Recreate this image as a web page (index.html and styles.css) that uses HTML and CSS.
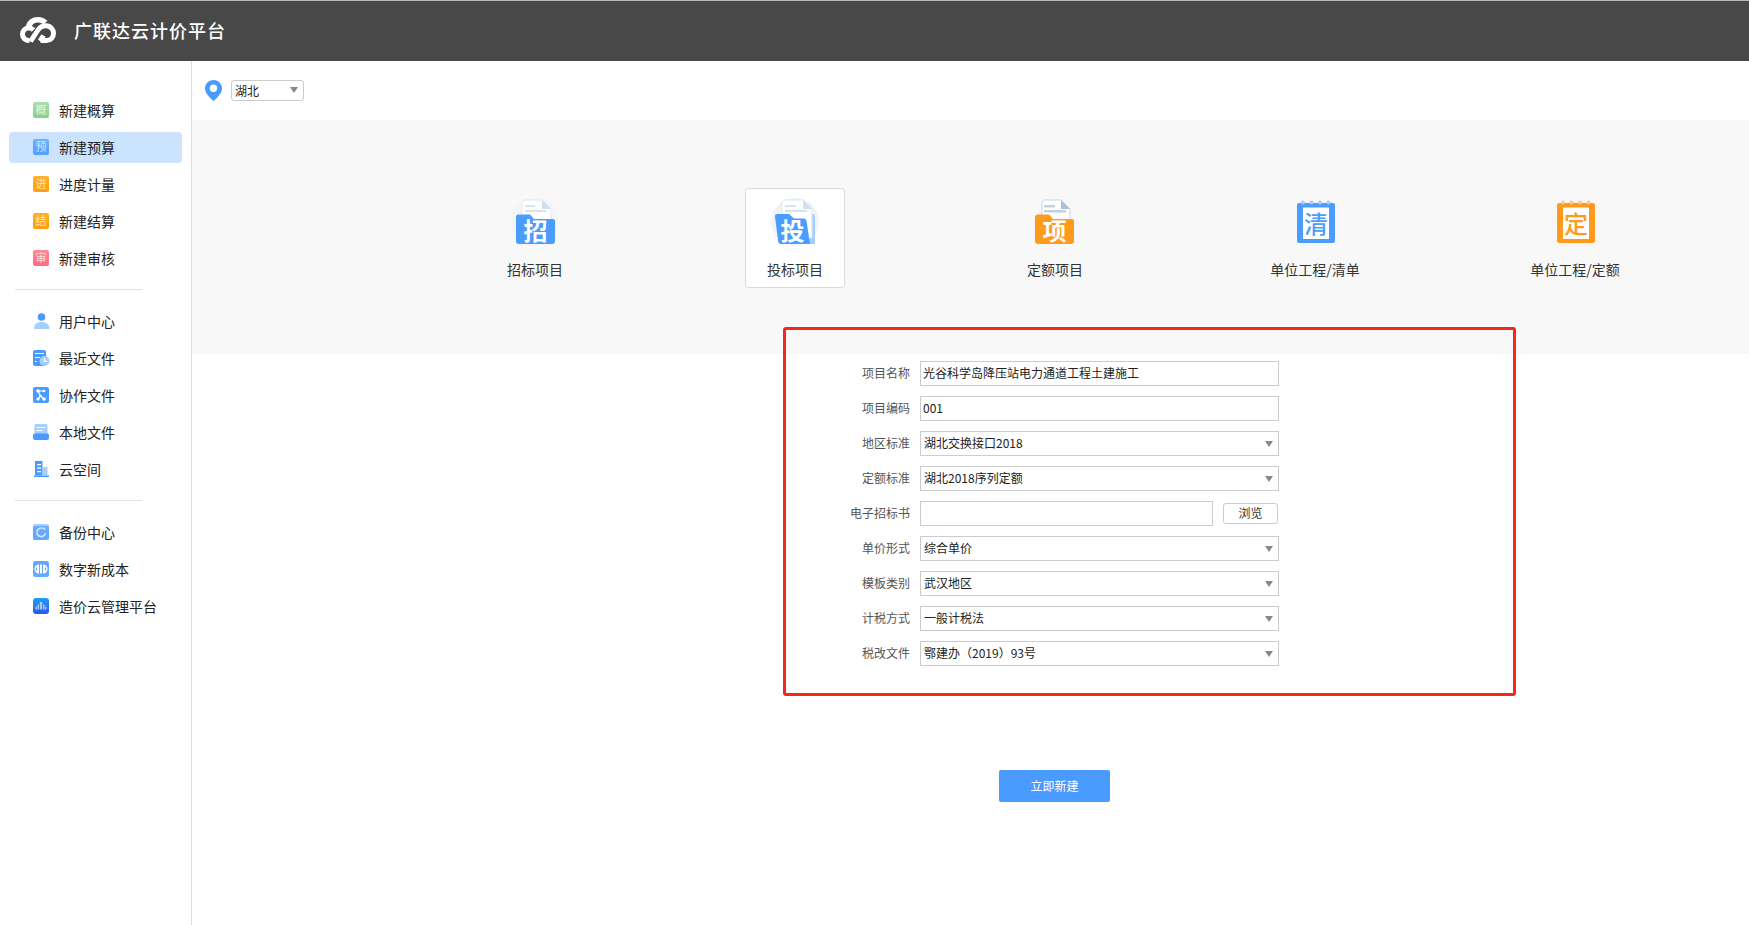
FILE: index.html
```html
<!DOCTYPE html>
<html lang="zh-CN">
<head>
<meta charset="utf-8">
<title>广联达云计价平台</title>
<link rel="stylesheet" href="styles.css">
</head>
<body>
<header class="topbar">
  <svg class="logo" viewBox="0 0 36 26" fill="none">
    <path class="logo-stroke" d="M9.500 23.500C5 23.500 2.500 20.500 2.500 17.300C2.500 14 5 11.200 8.500 10.800C10.500 10.800 12 11.500 13.500 13"/>
    <path class="logo-stroke thick" d="M8.500 9.500C10 5 14 2.800 18 2.800C21 2.800 23.500 3.800 25.500 5.800"/>
    <path class="logo-stroke" d="M10.500 24.500L18 13C20 10 23 8.800 26 8.800C30.500 8.800 33.500 12.500 33.500 16.300C33.500 20.500 30.500 23.500 26.500 23.500H20.500"/>
    <path class="logo-stroke" d="M20 24L23.500 18.500"/>
  </svg>
  <h1 class="brand">广联达云计价平台</h1>
</header>
<div class="layout">
  <nav class="sidebar">
    <ul class="nav-group">
      <li class="nav-item"><span class="badge badge-green">概</span>新建概算</li>
      <li class="nav-item active"><span class="badge badge-blue">预</span>新建预算</li>
      <li class="nav-item"><span class="badge badge-orange">进</span>进度计量</li>
      <li class="nav-item"><span class="badge badge-orange">结</span>新建结算</li>
      <li class="nav-item"><span class="badge badge-red">审</span>新建审核</li>
    </ul>
    <hr class="nav-divider">
    <ul class="nav-group">
      <li class="nav-item">
        <svg class="nav-icon" viewBox="0 0 16 16"><path class="c-pale" d="M1 16C1 11.500 4 9 8.500 9S16.500 11.500 16.500 16Z"/><circle class="c-blue" cx="8.500" cy="4" r="3.800"/></svg>
        用户中心</li>
      <li class="nav-item">
        <svg class="nav-icon" viewBox="0 0 16 16"><rect class="c-blue" x="0" y="0" width="13" height="16" rx="2"/><path class="c-white" d="M2 3H11V4H2ZM2 7H7V8H2ZM2 11H4V12H2Z"/><circle class="c-pale" cx="11.500" cy="11" r="5"/><path class="line-white" d="M11.500 8V11.300H14"/></svg>
        最近文件</li>
      <li class="nav-item">
        <svg class="nav-icon" viewBox="0 0 16 16"><rect class="c-blue" width="16" height="16" rx="2"/><path class="line-white" d="M5 4L7.500 9L11 12M5 4H11M7.500 9L5 12"/><circle class="c-white" cx="5" cy="4" r="1.800"/><circle class="c-white" cx="11" cy="4" r="1.300"/><circle class="c-white" cx="7.500" cy="9" r="1.300"/><circle class="c-white" cx="5" cy="12" r="1.600"/><circle class="c-white" cx="11" cy="12" r="1.800"/></svg>
        协作文件</li>
      <li class="nav-item">
        <svg class="nav-icon" viewBox="0 0 16 16"><rect class="c-pale" x="1.500" y="0" width="13" height="11" rx="1.500"/><path class="c-white" d="M3.500 3H12.500V4H3.500ZM3.500 6H9.500V7H3.500Z"/><path class="c-blue" d="M0 11.500C0 10 1 9.500 2 9.500H14C15 9.500 16 10 16 11.500V14C16 15.200 15 16 14 16H2C1 16 0 15.200 0 14Z"/></svg>
        本地文件</li>
      <li class="nav-item">
        <svg class="nav-icon" viewBox="0 0 16 16"><path class="c-blue" d="M2 0H9.500V14.500H2Z"/><path class="c-pale" d="M10 6H14.500V14.500H10Z"/><path class="c-white" d="M4 3H8V4.200H4ZM4 6.500H8V7.700H4ZM4 10H8V11.200H4Z"/><rect class="c-blue" x="1" y="14.500" width="15" height="1.500"/></svg>
        云空间</li>
    </ul>
    <hr class="nav-divider">
    <ul class="nav-group">
      <li class="nav-item">
        <svg class="nav-icon" viewBox="0 0 16 16"><rect class="c-pale" width="16" height="16" rx="2"/><rect class="c-blue-soft" y="2" width="16" height="14" rx="2"/><path class="line-pale" d="M11.500 5.500A4.300 4.300 0 1 0 12.500 9"/><path class="c-pale" d="M10 3.500L13 3.500L13 6.800Z"/></svg>
        备份中心</li>
      <li class="nav-item">
        <svg class="nav-icon" viewBox="0 0 16 16"><rect class="c-blue-soft" width="16" height="16" rx="2.500"/><path class="c-white" d="M6 3.500V12.500A4.500 4.500 0 0 1 6 3.500ZM10 3.500A4.500 4.500 0 0 1 10 12.500ZM7 3.500H9V12.500H7Z"/><path class="line-blue" d="M3.500 6.500V9.500M12.500 6.500V9.500"/></svg>
        数字新成本</li>
      <li class="nav-item">
        <svg class="nav-icon" viewBox="0 0 16 16"><defs><linearGradient id="deep" x1="0" y1="0" x2="0" y2="1"><stop offset="0" stop-color="#1ea0f5"/><stop offset="1" stop-color="#2a55ee"/></linearGradient></defs><rect width="16" height="16" rx="3" fill="url(#deep)"/><path class="c-translucent" d="M2.500 11.500V8.500H4V11.500H4.500V6.500H6V11.500H6.800V4H9.200V11.500H10V6.500H11.500V11.500H12V8.500H13.500V11.500Z"/></svg>
        造价云管理平台</li>
    </ul>
  </nav>

  <main class="content">
    <div class="region-bar">
      <svg class="pin" viewBox="0 0 17 21"><path class="pin-body" d="M8.500 0C3.800 0 0 3.700 0 8.300C0 13.500 5.500 18.500 8.500 21C11.500 18.500 17 13.500 17 8.300C17 3.700 13.200 0 8.500 0Z"/><circle class="c-white" cx="8.500" cy="8.300" r="3.700"/></svg>
      <div class="select-wrap region-select"><select class="control select-plain"><option>湖北</option></select></div>
    </div>

    <section class="type-band">
      <div class="type-cell"><div class="type-card">
        <svg class="type-icon" viewBox="0 0 48 48">
          <circle class="halo" cx="24" cy="24" r="24"/>
          <path class="doc" d="M11 5C11 3.300 12.300 2 14 2H31L40 11V30H11Z"/>
          <path class="fold" d="M31 2L40 11H31Z"/>
          <path class="doc-line" d="M14 7H24V9H14ZM14 12H35V14H14Z"/>
          <path class="folder-blue" d="M5 19C5 17.500 6 16.500 7.500 16.500H19L23 21H42C43.500 21 44 22 44 23V43C44 45 43 46 41 46H8C6 46 5 45 5 43Z"/>
          <text class="icon-char" x="24.500" y="42">招</text>
        </svg>
        <span class="type-label">招标项目</span>
      </div></div>
      <div class="type-cell"><div class="type-card selected">
        <svg class="type-icon" viewBox="0 0 48 48">
          <circle class="halo-strong" cx="24" cy="24" r="24"/>
          <path class="back-sheet" d="M36 16H42C43 16 44 17 44 18V46H36Z"/>
          <path class="doc" d="M11 5C11 3.300 12.300 2 14 2H32L41 11V40H11Z"/>
          <path class="fold" d="M32 2L41 11H32Z"/>
          <path class="doc-line" d="M14 7H25V9H14ZM14 12H36V14H14Z"/>
          <path class="folder-blue" d="M4 18.500C3.700 17 4.700 16 6 16H18L23 20.500H32C34 20.500 35 21 35.500 23L39 46H10C8 46 7.500 45 7.200 43.500Z"/>
          <text class="icon-char" x="21.500" y="42">投</text>
        </svg>
        <span class="type-label">投标项目</span>
      </div></div>
      <div class="type-cell"><div class="type-card">
        <svg class="type-icon" viewBox="0 0 48 48">
          <path class="doc-grey" d="M11 5C11 3.300 12.300 2 14 2H30L39 11V30H11Z"/>
          <path class="fold-grey" d="M30 2L39 11H30Z"/>
          <path class="doc-line-grey" d="M13 7H24V9.500H13ZM13 12H35V14.500H13Z"/>
          <path class="folder-orange" d="M4 19C4 17.500 5 16.500 6.500 16.500H18L22 21H41C42.500 21 43 22 43 23V43C43 45 42 46 40 46H7C5 46 4 45 4 43Z"/>
          <text class="icon-char" x="23.500" y="42">项</text>
        </svg>
        <span class="type-label">定额项目</span>
      </div></div>
      <div class="type-cell"><div class="type-card">
        <svg class="type-icon" viewBox="0 0 48 48">
          <rect class="folder-blue" x="6" y="5" width="38" height="40" rx="2"/>
          <g class="rings-blue"><circle cx="12" cy="4.500" r="2"/><circle cx="20.500" cy="4.500" r="2"/><circle cx="29" cy="4.500" r="2"/><circle cx="37.500" cy="4.500" r="2"/></g>
          <rect class="c-white" x="12" y="9.500" width="26" height="31.500"/>
          <text class="icon-char char-blue" x="25" y="34.500">清</text>
        </svg>
        <span class="type-label">单位工程/清单</span>
      </div></div>
      <div class="type-cell"><div class="type-card">
        <svg class="type-icon" viewBox="0 0 48 48">
          <rect class="folder-orange" x="6" y="5" width="38" height="40" rx="2"/>
          <g class="rings-orange"><circle cx="12" cy="4.500" r="2"/><circle cx="20.500" cy="4.500" r="2"/><circle cx="29" cy="4.500" r="2"/><circle cx="37.500" cy="4.500" r="2"/></g>
          <rect class="c-white" x="12" y="9.500" width="26" height="31.500"/>
          <text class="icon-char char-orange" x="25" y="34.500">定</text>
        </svg>
        <span class="type-label">单位工程/定额</span>
      </div></div>
    </section>

    <form class="project-form">
      <div class="form-row"><label class="form-label">项目名称</label><input class="control text-input" value="光谷科学岛降压站电力通道工程土建施工"></div>
      <div class="form-row"><label class="form-label">项目编码</label><input class="control text-input" value="001"></div>
      <div class="form-row"><label class="form-label">地区标准</label><div class="select-wrap"><select class="control"><option>湖北交换接口2018</option></select></div></div>
      <div class="form-row"><label class="form-label">定额标准</label><div class="select-wrap"><select class="control"><option>湖北2018序列定额</option></select></div></div>
      <div class="form-row"><label class="form-label">电子招标书</label><input class="control file-input"><button type="button" class="browse-btn">浏览</button></div>
      <div class="form-row"><label class="form-label">单价形式</label><div class="select-wrap"><select class="control"><option>综合单价</option></select></div></div>
      <div class="form-row"><label class="form-label">模板类别</label><div class="select-wrap"><select class="control"><option>武汉地区</option></select></div></div>
      <div class="form-row"><label class="form-label">计税方式</label><div class="select-wrap"><select class="control"><option>一般计税法</option></select></div></div>
      <div class="form-row"><label class="form-label">税改文件</label><div class="select-wrap"><select class="control"><option>鄂建办（2019）93号</option></select></div></div>
    </form>

    <button type="button" class="create-btn">立即新建</button>
    <div class="red-frame"></div>
  </main>
</div>
</body>
</html>
```
FILE: styles.css
```css
* { box-sizing: border-box; }
html, body { margin: 0; height: 100%; overflow: hidden; }
body {
  font-family: "Noto Sans CJK SC", "Liberation Sans", sans-serif;
  background: #fff;
  color: #333;
}

.topbar {
  height: 61px;
  border-top: 1px solid #b8b8b8;
  background: #484848;
  display: flex;
  align-items: center;
  padding: 0 0 2px 20px;
  gap: 18px;
}
.logo { width: 36px; height: 26px; }
.logo-stroke { stroke: #fff; stroke-width: 5; }
.logo-stroke.thick { stroke-width: 5.6; }
.brand {
  margin: 0;
  font-size: 18px;
  font-weight: 500;
  letter-spacing: 1px;
  color: #fff;
}

.layout { display: flex; height: 864px; }

.sidebar {
  width: 192px;
  flex: none;
  border-right: 1px solid #dcdcdc;
  padding: 34px 9px 0;
}
.nav-group { list-style: none; margin: 0; padding: 0; display: flex; flex-direction: column; gap: 6px; }
.nav-item {
  height: 31px;
  display: flex;
  align-items: center;
  gap: 10px;
  padding: 0 0 2px 24px;
  font-size: 14px;
  color: #222;
  border-radius: 4px;
}
.nav-item.active { background: #cbe3ff; }
.nav-divider { border: 0; height: 1px; background: #e3e3e3; margin: 15px 40px 16px 6px; }
.nav-icon { width: 16px; height: 16px; flex: none; overflow: visible; }

.badge {
  width: 16px;
  height: 16px;
  flex: none;
  border-radius: 2px;
  font-size: 11px;
  line-height: 15px;
  text-align: center;
  color: rgba(255, 255, 255, .72);
}
.badge-green { background: linear-gradient(#a8dfae, #84d18c); }
.badge-blue { background: linear-gradient(#6cb2ff, #4f9eff); }
.badge-orange { background: linear-gradient(#ffb224, #ff9d0a); }
.badge-red { background: linear-gradient(#ff8c96, #ff6c78); }

.c-blue { fill: #4a9bff; }
.c-pale { fill: #a5cfff; }
.c-white { fill: #fff; }
.c-blue-soft { fill: #62a9ff; }
.c-translucent { fill: rgba(255, 255, 255, .6); }
.line-white { fill: none; stroke: #fff; stroke-width: 1.2; }
.line-pale { fill: none; stroke: #d4e7ff; stroke-width: 1.6; }
.line-blue { fill: none; stroke: #62a9ff; stroke-width: 1.2; }

.content { position: relative; flex: 1; min-width: 0; }

.region-bar {
  height: 59px;
  display: flex;
  align-items: center;
  padding-left: 13px;
  gap: 9px;
}
.pin { width: 17px; height: 21px; }
.pin-body { fill: #4a9bff; }

.type-band {
  height: 234px;
  background: #f8f8f8;
  display: flex;
  padding: 68px 0 0 213px;
}
.type-cell { width: 260px; display: flex; justify-content: center; align-items: flex-start; }
.type-card {
  width: 100px;
  height: 100px;
  border: 1px solid transparent;
  border-radius: 3px;
  display: flex;
  flex-direction: column;
  align-items: center;
  padding-top: 9px;
}
.type-card.selected { background: #fff; border-color: #d5dde4; }
.type-icon { width: 48px; height: 48px; overflow: visible; }
.type-label { margin-top: 13px; font-size: 14px; line-height: 20px; color: #333; white-space: nowrap; }

.halo { fill: #f5f5f6; }
.halo-strong { fill: #f2f3f7; }
.doc { fill: #fff; stroke: #dfe8f3; }
.fold { fill: #cfdef0; }
.doc-line { fill: #d8e3f0; }
.doc-grey { fill: #fff; stroke: #c6d3e2; }
.fold-grey { fill: #aebfd3; }
.doc-line-grey { fill: #c2cfdd; }
.back-sheet { fill: #a5cdff; }
.folder-blue { fill: #4b9cff; }
.folder-orange { fill: #ff9a1c; }
.rings-blue { fill: #a5cdff; }
.rings-orange { fill: #ffc888; }
.icon-char {
  font-family: "Noto Sans CJK SC", sans-serif;
  font-size: 24px;
  font-weight: 700;
  fill: #fff;
  text-anchor: middle;
}
.char-blue { fill: #4b9cff; font-weight: 500; }
.char-orange { fill: #ff9a1c; font-weight: 500; }

.project-form { padding: 7px 0 0 618px; display: flex; flex-direction: column; gap: 10px; }
.form-row { height: 25px; display: flex; align-items: center; }
.form-label { width: 100px; flex: none; margin: 0 10px 2px 0; text-align: right; font-size: 12px; color: #555; }

.control {
  display: block;
  height: 25px;
  border: 1px solid #ccc;
  background: #fff;
  font: inherit;
  font-size: 12px;
  color: #222;
  padding: 0 2px 3px;
  border-radius: 0;
  outline: none;
  margin: 0;
}
.text-input { width: 359px; }
.file-input { width: 293px; }
.select-wrap { position: relative; width: 359px; height: 25px; }
.select-wrap select { width: 100%; appearance: none; padding: 0 3px 3px; }
.select-wrap::after {
  content: "";
  position: absolute;
  right: 6px;
  top: 10px;
  border-left: 4px solid transparent;
  border-right: 4px solid transparent;
  border-top: 6px solid #888;
  pointer-events: none;
}
.region-select { width: 73px; height: 21px; }
.select-wrap .select-plain { height: 21px; border-radius: 3px; padding-bottom: 1px; }
.region-select::after { right: 6px; top: 7px; }

.browse-btn {
  width: 55px;
  height: 21px;
  margin-left: 10px;
  border: 1px solid #ccc;
  border-radius: 3px;
  background: #fff;
  font: inherit;
  font-size: 12px;
  color: #333;
  padding: 0 0 2px;
}

.create-btn {
  display: block;
  width: 111px;
  height: 32px;
  margin: 104px 0 0 807px;
  border: 0;
  border-radius: 2px;
  background: #4a9bff;
  color: #fff;
  font: inherit;
  font-size: 12px;
  padding: 0 0 2px;
}

.red-frame {
  position: absolute;
  left: 591px;
  top: 266px;
  width: 733px;
  height: 369px;
  border: 3px solid #f5261c;
  border-radius: 3px;
  pointer-events: none;
}
```
